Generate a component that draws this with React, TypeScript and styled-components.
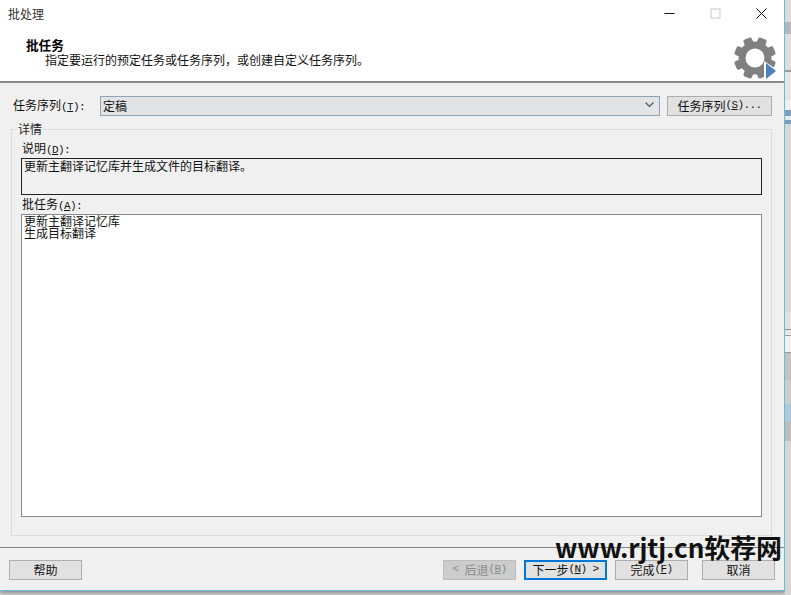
import styled, { createGlobalStyle } from "styled-components";

const GlobalStyle = createGlobalStyle`
  html, body {
    margin: 0;
    padding: 0;
    background: #d6d6d6;
  }
`;

const Screen = styled.div`
  width: 791px;
  height: 595px;
  overflow: hidden;
  position: relative;
  display: flex;
  align-items: flex-start;
  font-family: "Noto Sans CJK SC", "Liberation Sans", sans-serif;
  font-size: 12px;
  color: #111;
  background: #d4d4d4;
`;

const Dialog = styled.div`
  width: 784px;
  height: 590px;
  flex: none;
  display: flex;
  flex-direction: column;
  background: #f0f0f0;
  border-right: 1px solid #62bfd6;
  border-bottom: 1px solid #62bfd6;
  box-shadow: 0 2px 4px rgba(0, 0, 0, 0.35);
`;

const TitleBar = styled.div`
  height: 27px;
  flex: none;
  display: flex;
  align-items: center;
  background: #fff;
  padding-left: 8px;
`;

const TitleText = styled.div`
  flex: 1;
  color: #333;
  line-height: 12px;
`;

const WindowButton = styled.div`
  width: 46px;
  height: 27px;
  display: flex;
  align-items: center;
  justify-content: center;
`;

const Header = styled.div`
  height: 54px;
  flex: none;
  display: flex;
  justify-content: space-between;
  background: #fff;
  border-bottom: 2px solid #8a8a8a;
  box-sizing: content-box;
`;

const HeaderText = styled.div`
  padding: 11px 0 0 26px;
`;

const HeaderTitle = styled.div`
  font-size: 12.6px;
  font-weight: 700;
  line-height: 14px;
  color: #000;
`;

const HeaderSub = styled.div`
  line-height: 14px;
  margin-top: 1px;
  padding-left: 19px;
  color: #111;
`;

const GearSlot = styled.div`
  padding: 9px 7px 0 0;
  height: 45px;
  overflow: hidden;
`;

const Body = styled.div`
  flex: 1;
  min-height: 0;
  display: flex;
  flex-direction: column;
  padding: 13px 12px 11px 11px;
`;

const SequenceRow = styled.div`
  display: flex;
  align-items: center;
  height: 20px;
  margin-bottom: 6px;
`;

const RowLabel = styled.label`
  width: 89px;
  flex: none;
  padding-left: 2px;
  box-sizing: border-box;
  line-height: 14px;
  white-space: nowrap;
`;

const Combo = styled.div`
  flex: 1;
  height: 20px;
  box-sizing: border-box;
  display: flex;
  align-items: center;
  justify-content: space-between;
  padding: 0 5px 2px 2px;
  background: #e1e3e5;
  border: 1px solid #8fa4b8;
`;

const SequenceButton = styled.div`
  width: 105px;
  height: 20px;
  flex: none;
  box-sizing: border-box;
  margin-left: 7px;
  padding-bottom: 2px;
  display: flex;
  align-items: center;
  justify-content: center;
  background: #e1e1e1;
  border: 1px solid #adadad;
  white-space: nowrap;
`;

const Details = styled.fieldset`
  flex: 1;
  min-height: 0;
  margin: 0;
  padding: 5px 9px 18px 9px;
  min-width: 0;
  display: flex;
  flex-direction: column;
  border: 1px solid #dcdcdc;
`;

const DetailsLegend = styled.legend`
  margin-left: -4px;
  padding: 0 1px;
  line-height: 14px;
  color: #222;
`;

const FieldLabel = styled.div`
  padding-left: 1px;
  line-height: 14px;
  height: 14px;
  margin-bottom: 3px;
`;

const DescriptionBox = styled.div`
  height: 37px;
  box-sizing: border-box;
  padding: 0 2px;
  line-height: 14px;
  background: #f0f0f0;
  border: 1px solid #222;
  margin-bottom: 2px;
`;

const TaskList = styled.div`
  flex: 1;
  min-height: 0;
  box-sizing: border-box;
  padding: 0 2px;
  background: #fff;
  border: 1px solid #868a96;
`;

const TaskItem = styled.div`
  line-height: 12px;
  height: 12px;
`;

const Footer = styled.div`
  height: 43px;
  flex: none;
  display: flex;
  align-items: flex-start;
  gap: 8px;
  padding: 12px 9px 0;
  box-sizing: border-box;
  border-top: 1px solid #858585;
`;

const FooterButton = styled.div<{ $width?: number; $disabled?: boolean; $primary?: boolean; $push?: number }>`
  width: ${(p) => p.$width ?? 73}px;
  height: 20px;
  box-sizing: border-box;
  margin-left: ${(p) => p.$push ?? 0}px;
  padding-bottom: 2px;
  display: flex;
  align-items: center;
  justify-content: center;
  white-space: nowrap;
  background: ${(p) => (p.$disabled ? "#cccccc" : "#e1e1e1")};
  color: ${(p) => (p.$disabled ? "#8a8a8a" : "#111")};
  border: ${(p) =>
    p.$primary ? "2px solid #0078d7" : p.$disabled ? "1px solid #bdbdbd" : "1px solid #adadad"};
`;

const FooterSpacer = styled.div`
  flex: 1;
`;

const Half = styled.span`
  font-family: "Liberation Mono", monospace;
  font-size: 11px;
  letter-spacing: -0.6px;
`;

const Hot = styled.span`
  text-decoration: underline;
`;

const Backdrop = styled.div`
  flex: 1;
  height: 595px;
  display: flex;
  flex-direction: column;
`;

const BackdropPiece = styled.div<{ $h: number; $c: string }>`
  height: ${(p) => p.$h}px;
  flex: none;
  background: ${(p) => p.$c};
`;

const Watermark = styled.div`
  position: absolute;
  left: 555px;
  top: 529px;
  font-size: 26px;
  font-weight: 700;
  line-height: 36px;
  color: #111;
  white-space: nowrap;
  letter-spacing: -0.1px;
`;

const strip: [number, string][] = [
  [22, "#dcdcdc"],
  [12, "#b4b8bc"],
  [36, "#dedede"],
  [2, "#9a9a9a"],
  [28, "#e4e4e4"],
  [10, "#f0f0f0"],
  [6, "#7f9db8"],
  [4, "#e8e8e8"],
  [4, "#7f9db8"],
  [188, "#d8d8d8"],
  [17, "#e2e2e2"],
  [1, "#8c8c8c"],
  [5, "#e8e8e8"],
  [1, "#9a9a9a"],
  [16, "#f0f0f0"],
  [1, "#9a9a9a"],
  [27, "#c4c4c4"],
  [24, "#cdcdcd"],
  [17, "#b2c8dc"],
  [20, "#bcbcbc"],
  [154, "#d6d6d6"],
];

const teeth = [0, 45, 90, 135, 180, 225, 270, 315];

function GearIcon() {
  return (
    <svg width="44" height="44" viewBox="0 0 44 44">
      <g fill="#808080">
        {teeth.map((a) => (
          <rect key={a} x="17.5" y="1" width="9" height="10" rx="2" transform={`rotate(${a + 22.5} 22 22)`} />
        ))}
        <circle cx="22" cy="22" r="16.5" />
      </g>
      <circle cx="22" cy="22" r="9.5" fill="#fff" />
      <path d="M31 25 L43 33 L31 43 Z" fill="#fff" />
      <path d="M33 27 L43 35 L33 43 Z" fill="#4a80bd" />
    </svg>
  );
}

function MinimizeIcon() {
  return (
    <svg width="11" height="11" viewBox="0 0 11 11">
      <path d="M0.5 5.5H10.5" stroke="#111" strokeWidth="1" />
    </svg>
  );
}

function MaximizeIcon() {
  return (
    <svg width="11" height="11" viewBox="0 0 11 11">
      <rect x="1" y="1" width="9" height="9" fill="none" stroke="#c8c8c8" />
    </svg>
  );
}

function CloseIcon() {
  return (
    <svg width="11" height="11" viewBox="0 0 11 11">
      <path d="M0.5 0.5L10.5 10.5M10.5 0.5L0.5 10.5" stroke="#111" strokeWidth="1" />
    </svg>
  );
}

function ChevronIcon() {
  return (
    <svg width="9" height="6" viewBox="0 0 9 6">
      <path d="M0.5 0.5L4.5 4.5L8.5 0.5" fill="none" stroke="#555" strokeWidth="1.2" />
    </svg>
  );
}

export default function App() {
  return (
    <>
      <GlobalStyle />
      <Screen>
        <Dialog>
          <TitleBar>
            <TitleText>批处理</TitleText>
            <WindowButton>
              <MinimizeIcon />
            </WindowButton>
            <WindowButton>
              <MaximizeIcon />
            </WindowButton>
            <WindowButton>
              <CloseIcon />
            </WindowButton>
          </TitleBar>
          <Header>
            <HeaderText>
              <HeaderTitle>批任务</HeaderTitle>
              <HeaderSub>指定要运行的预定任务或任务序列，或创建自定义任务序列。</HeaderSub>
            </HeaderText>
            <GearSlot>
              <GearIcon />
            </GearSlot>
          </Header>
          <Body>
            <SequenceRow>
              <RowLabel>
                任务序列<Half>(<Hot>T</Hot>):</Half>
              </RowLabel>
              <Combo>
                定稿
                <ChevronIcon />
              </Combo>
              <SequenceButton>
                任务序列<Half>(<Hot>S</Hot>)...</Half>
              </SequenceButton>
            </SequenceRow>
            <Details>
              <DetailsLegend>详情</DetailsLegend>
              <FieldLabel>
                说明<Half>(<Hot>D</Hot>):</Half>
              </FieldLabel>
              <DescriptionBox>更新主翻译记忆库并生成文件的目标翻译。</DescriptionBox>
              <FieldLabel>
                批任务<Half>(<Hot>A</Hot>):</Half>
              </FieldLabel>
              <TaskList>
                <TaskItem>更新主翻译记忆库</TaskItem>
                <TaskItem>生成目标翻译</TaskItem>
              </TaskList>
            </Details>
          </Body>
          <Footer>
            <FooterButton>帮助</FooterButton>
            <FooterSpacer />
            <FooterButton $disabled>
              <Half>&lt;&nbsp;</Half>后退<Half>(<Hot>B</Hot>)</Half>
            </FooterButton>
            <FooterButton $primary $width={83}>
              下一步<Half>(<Hot>N</Hot>)&nbsp;&gt;</Half>
            </FooterButton>
            <FooterButton>
              完成<Half>(<Hot>F</Hot>)</Half>
            </FooterButton>
            <FooterButton $push={6}>取消</FooterButton>
          </Footer>
        </Dialog>
        <Backdrop>
          {strip.map(([h, c], i) => (
            <BackdropPiece key={i} $h={h} $c={c} />
          ))}
        </Backdrop>
        <Watermark>www.rjtj.cn软荐网</Watermark>
      </Screen>
    </>
  );
}
